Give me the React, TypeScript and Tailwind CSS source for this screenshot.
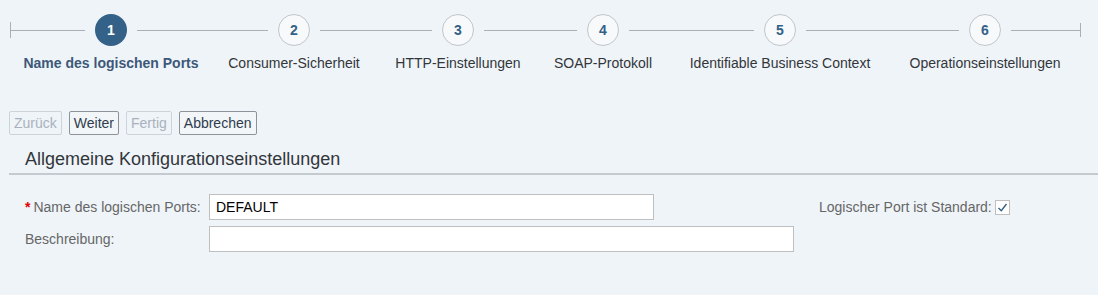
import React from 'react';

type Step = { n: number; label: string; width: string };

const STEPS: Step[] = [
  { n: 1, label: 'Name des logischen Ports', width: 'w-[200px]' },
  { n: 2, label: 'Consumer-Sicherheit', width: 'w-[166px]' },
  { n: 3, label: 'HTTP-Einstellungen', width: 'w-[162px]' },
  { n: 4, label: 'SOAP-Protokoll', width: 'w-[128px]' },
  { n: 5, label: 'Identifiable Business Context', width: 'w-[226px]' },
  { n: 6, label: 'Operationseinstellungen', width: 'w-[184px]' },
];

const StepItem: React.FC<{ step: Step; active: boolean }> = ({ step, active }) => (
  <div className={`${step.width} flex flex-col items-center shrink-0`}>
    <div className="flex items-center w-full h-[32px]">
      <div className="flex-1 h-px bg-[#a9b0b7]" />
      <div
        className={
          active
            ? 'mx-[10px] w-[32px] h-[32px] rounded-full bg-[#346187] text-white flex items-center justify-center text-[14px] font-bold'
            : 'mx-[10px] w-[32px] h-[32px] rounded-full border border-[#bfc6cc] bg-[#f7f9fb] text-[#346187] flex items-center justify-center text-[14px] font-bold'
        }
      >
        {step.n}
      </div>
      <div className="flex-1 h-px bg-[#a9b0b7]" />
    </div>
    <div
      className={
        active
          ? 'mt-[7px] text-[14px] font-bold text-[#3d5878] whitespace-nowrap'
          : 'mt-[7px] text-[14px] text-[#32363a] whitespace-nowrap'
      }
    >
      {step.label}
    </div>
  </div>
);

const Btn: React.FC<{ label: string; disabled?: boolean }> = ({ label, disabled }) => (
  <button
    disabled={disabled}
    className={
      disabled
        ? 'h-[24px] px-[4px] rounded-[2px] border border-[#ccd3d9] text-[14px] text-[#a9b2bb] bg-transparent'
        : 'h-[24px] px-[4px] rounded-[2px] border border-[#8c939a] text-[14px] text-[#2e3c4e] bg-[#f3f6f9]'
    }
  >
    {label}
  </button>
);

export default function App() {
  return (
    <div className="w-[1098px] h-[295px] bg-[#eff4f9] font-['Liberation_Sans',Arial,sans-serif] overflow-hidden">
      {/* roadmap */}
      <div className="flex pt-[14px] pl-[10px]">
        <div className="w-px h-[16px] bg-[#a9b0b7] mt-[8px]" />
        {STEPS.map((s) => (
          <StepItem key={s.n} step={s} active={s.n === 1} />
        ))}
        <div className="w-[3px] h-[32px] flex items-center shrink-0">
          <div className="w-full h-px bg-[#a9b0b7]" />
        </div>
        <div className="w-px h-[14px] bg-[#a9b0b7] mt-[9px]" />
      </div>

      {/* toolbar */}
      <div className="flex gap-[7px] pl-[9px] mt-[37px]">
        <Btn label="Zurück" disabled />
        <Btn label="Weiter" />
        <Btn label="Fertig" disabled />
        <Btn label="Abbrechen" />
      </div>

      {/* section title */}
      <div className="ml-[9px] mt-[12px] border-b-2 border-[#c4cacf] pl-[16px] pb-[2px]">
        <h2 className="text-[18px] text-[#32363a] leading-[24px]">Allgemeine Konfigurationseinstellungen</h2>
      </div>

      {/* form */}
      <div className="pl-[25px] pt-[19px] flex">
        <div className="flex flex-col gap-[6px]">
          <div className="flex items-center h-[26px]">
            <label className="w-[184px] text-[14px] text-[#666666] whitespace-nowrap">
              <span className="text-[#e00000] font-bold mr-[3px]">*</span>Name des logischen Ports:
            </label>
            <input
              readOnly
              value="DEFAULT"
              className="w-[445px] h-[26px] bg-white border border-[#bfbfbf] px-[6px] text-[14px] text-[#000000] outline-none"
            />
          </div>
          <div className="flex items-center h-[26px]">
            <label className="w-[184px] text-[14px] text-[#666666]">Beschreibung:</label>
            <input
              readOnly
              value=""
              className="w-[585px] h-[26px] bg-white border border-[#bfbfbf] px-[6px] text-[14px] outline-none"
            />
          </div>
        </div>
        <div className="flex items-center h-[26px] ml-[25px] gap-[3px]">
          <span className="text-[14px] text-[#666666] whitespace-nowrap">Logischer Port ist Standard:</span>
          <span className="w-[15px] h-[15px] border border-[#bfbfbf] bg-white flex items-center justify-center">
            <svg width="11" height="11" viewBox="0 0 11 11" fill="none">
              <path d="M1.5 6 L4.3 8.8 L9.5 2" stroke="#346187" strokeWidth="1.4" />
            </svg>
          </span>
        </div>
      </div>
    </div>
  );
}
